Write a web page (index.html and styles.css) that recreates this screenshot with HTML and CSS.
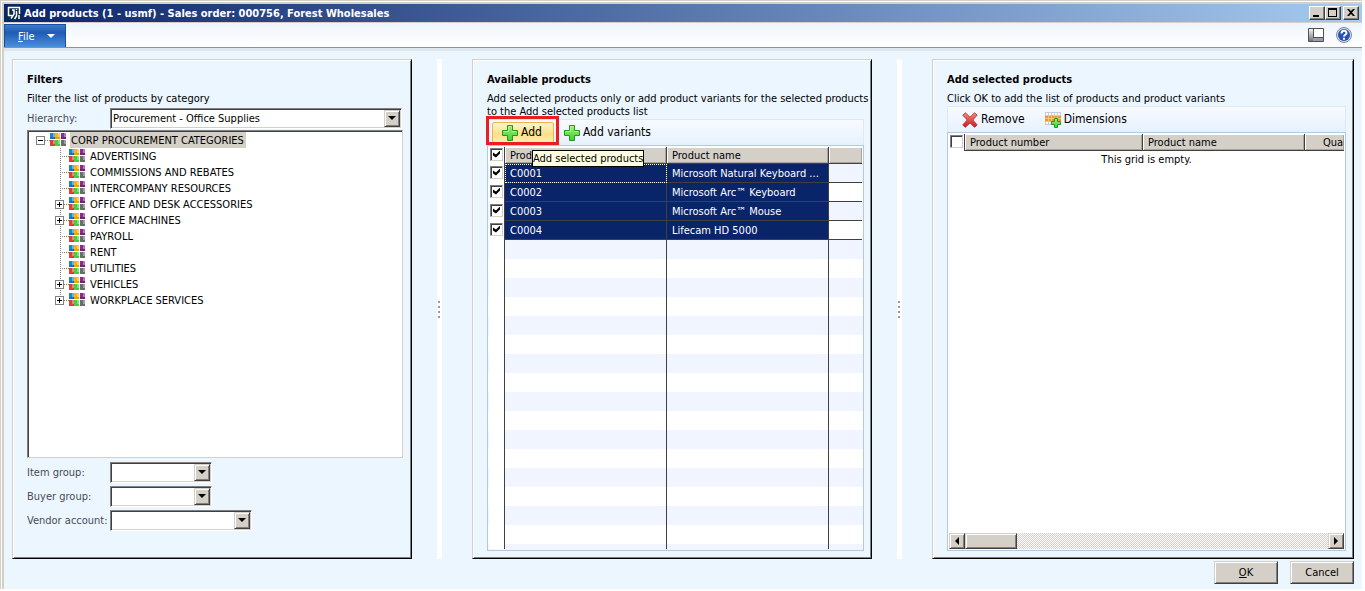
FILE: index.html
```html
<!DOCTYPE html>
<html lang="en">
<head>
    <meta charset="UTF-8">
    <meta name="viewport" content="width=device-width, initial-scale=1.0">
    <title>Add products (1 - usmf) - Sales order: 000756, Forest Wholesales</title>
    <link rel="stylesheet" href="styles.css">
</head>
<body>
    <!-- Shared icons -->
    <svg class="sprite" aria-hidden="true">
        <linearGradient id="plus-fill" x1="0" y1="0" x2="0" y2="1">
            <stop offset="0" stop-color="#a4ee7c"/>
            <stop offset="1" stop-color="#43cd33"/>
        </linearGradient>
        <linearGradient id="cross-fill" x1="0" y1="0" x2="0" y2="1">
            <stop offset="0" stop-color="#f58a84"/>
            <stop offset="1" stop-color="#d0161c"/>
        </linearGradient>
        <linearGradient id="pane-fill" x1="0" y1="0" x2="0" y2="1">
            <stop offset="0" stop-color="#f4f4f6"/>
            <stop offset="1" stop-color="#70757c"/>
        </linearGradient>
        <symbol id="icon-category" viewBox="0 -1 16 16">
            <path fill="#1b87d0" d="M0 0h5v6H0z"/>
            <path fill="#f9b414" d="M5 0h5v6H5z"/>
            <path fill="#8e2a96" d="M11 0h5v6h-5z"/>
            <path fill="#d9403a" d="M0 7h5v6H0z"/>
            <path fill="#3fd23c" d="M5 7h5v6H5z"/>
            <path fill="#6c6c6c" d="M11 7h5v6h-5z"/>
            <path fill="#fff" fill-opacity=".35" d="M3 0h2v4H3zM8 0h2v4H8zM14 0h2v4h-2zM3 7h2v4H3zM8 7h2v4H8zM14 7h2v4h-2z"/>
            <path fill="#0b5fa3" d="M0 4h5v2H0z" opacity=".5"/>
            <path fill="#d98800" d="M5 4h5v2H5z" opacity=".5"/>
            <path fill="#5e1266" d="M11 4h5v2h-5z" opacity=".5"/>
        </symbol>
        <symbol id="icon-plus" viewBox="0 0 16 16">
            <path fill="url(#plus-fill)" stroke="#1f9a1c" d="M5.500.500h5v5h5v5h-5v5h-5v-5h-5v-5h5z"/>
            <path fill="none" stroke="#c5f7ac" stroke-opacity=".7" d="M6.500 1.500h3M6.500 2v4.500H2M14 6.500h-4"/>
        </symbol>
        <symbol id="icon-cross" viewBox="0 0 16 16">
            <path fill="url(#cross-fill)" stroke="#a8262a" stroke-width=".8" stroke-linejoin="round" d="M3.500.800 8 5.200 12.500.800 15.200 3 10.800 8 15.200 13 12.600 15.300 8 10.900 3.400 15.300.700 13 5.200 8 .800 3.200z"/>
        </symbol>
        <symbol id="icon-dimensions" viewBox="0 0 16 16">
            <path fill="#c3cde0" d="M0 0h16v13H0z"/>
            <path fill="#fff" d="M1 1h2v2H1zM4 1h2v2H4zM7 1h2v2H7zM10 1h2v2h-2zM13 1h2v2h-2zM1 10h2v2H1zM4 10h2v2H4z"/>
            <path fill="#f0962c" d="M0 4h16v5H0z"/>
            <path stroke="#fbd49a" stroke-opacity=".7" d="M3.500 4v5M6.500 4v5M9.500 4v5M12.500 4v5M0 6.500h16"/>
            <path fill="url(#plus-fill)" stroke="#1f9a1c" d="M9.500 6.500h3v3h3v3h-3v3h-3v-3h-3v-3h3z"/>
        </symbol>
    </svg>

    <div class="window">
        <div class="title-bar">
            <svg class="app-icon" viewBox="0 0 14 14" aria-hidden="true">
                <path fill="#0a2a50" d="M0 0h14v14H0z"/>
                <path fill="none" stroke="#fff" stroke-width="1.500" d="M1 1.500h12M1.500 1v9M1 9.500h4M12.500 1v7"/>
                <path fill="none" stroke="#fff" stroke-width="1.500" d="M5 4h2v4L4 12.500M9.500 5v5l-2 3M12 9v4M9.500 3v1"/>
            </svg>
            <h1 class="window-title">Add products (1 - usmf) - Sales order: 000756, Forest Wholesales</h1>
            <div class="window-buttons">
                <button type="button" class="bevel window-btn" aria-label="Minimize">
                    <svg viewBox="0 0 12 10"><path d="M2 7h6v2H2z"/></svg>
                </button>
                <button type="button" class="bevel window-btn" aria-label="Maximize">
                    <svg viewBox="0 0 12 10"><path fill-rule="evenodd" d="M1 0h9v9H1zM2 2v6h7V2z"/></svg>
                </button>
                <button type="button" class="bevel window-btn close-btn" aria-label="Close">
                    <svg viewBox="0 0 12 10"><path d="M2 1h2l2 2 2-2h2L7 4.500 10 8H8L6 6 4 8H2l3-3.500z"/></svg>
                </button>
            </div>
        </div>

        <div class="ribbon">
            <button type="button" class="file-btn">
                <span><u>F</u>ile</span>
                <svg viewBox="0 0 8 4" aria-hidden="true"><path fill="#fff" d="M0 0h8L4 4z"/></svg>
            </button>
            <div class="ribbon-tools">
                <button type="button" class="tool-btn" aria-label="View">
                    <svg viewBox="0 0 16 16">
                        <path fill="#fff" stroke="#4c5056" d="M.500 1.500h15v13H.500z"/>
                        <path fill="url(#pane-fill)" d="M1 2h4v12H1z"/>
                        <path fill="#9a9ea6" d="M5 11h10v3H5z"/>
                        <path stroke="#4c5056" d="M5.500 2v8M5 10.500h10"/>
                    </svg>
                </button>
                <button type="button" class="tool-btn" aria-label="Help">
                    <svg viewBox="0 0 16 16">
                        <circle cx="8" cy="8" r="7.500" fill="#d5dbe6" stroke="#7e8aa0"/>
                        <circle cx="8" cy="8" r="6" fill="#2750b8"/>
                        <path fill="none" stroke="#fff" stroke-width="2" d="M5.500 6.500c0-3.500 5-3.500 5-.500C10.500 8 8 7.500 8 9.600"/>
                        <path fill="#fff" d="M7 10.800h2v2H7z"/>
                    </svg>
                </button>
            </div>
        </div>

        <main class="workspace">
            <section class="panel filters">
                <h2>Filters</h2>
                <p>Filter the list of products by category</p>
                <div class="field">
                    <label for="hierarchy">Hierarchy:</label>
                    <div class="combo combo-wide">
                        <select id="hierarchy"><option>Procurement - Office Supplies</option></select>
                        <span class="bevel combo-arrow"></span>
                    </div>
                </div>

                <div class="tree">
                    <div class="tree-row root-row">
                        <button type="button" class="expander open" aria-label="Collapse"></button>
                        <svg class="icon"><use href="#icon-category"/></svg>
                        <span class="tree-label selected">CORP PROCUREMENT CATEGORIES</span>
                    </div>
                    <ul>
                        <li class="tree-row"><svg class="icon"><use href="#icon-category"/></svg><span class="tree-label">ADVERTISING</span></li>
                        <li class="tree-row"><svg class="icon"><use href="#icon-category"/></svg><span class="tree-label">COMMISSIONS AND REBATES</span></li>
                        <li class="tree-row"><svg class="icon"><use href="#icon-category"/></svg><span class="tree-label">INTERCOMPANY RESOURCES</span></li>
                        <li class="tree-row"><button type="button" class="expander" aria-label="Expand"></button><svg class="icon"><use href="#icon-category"/></svg><span class="tree-label">OFFICE AND DESK ACCESSORIES</span></li>
                        <li class="tree-row"><button type="button" class="expander" aria-label="Expand"></button><svg class="icon"><use href="#icon-category"/></svg><span class="tree-label">OFFICE MACHINES</span></li>
                        <li class="tree-row"><svg class="icon"><use href="#icon-category"/></svg><span class="tree-label">PAYROLL</span></li>
                        <li class="tree-row"><svg class="icon"><use href="#icon-category"/></svg><span class="tree-label">RENT</span></li>
                        <li class="tree-row"><svg class="icon"><use href="#icon-category"/></svg><span class="tree-label">UTILITIES</span></li>
                        <li class="tree-row"><button type="button" class="expander" aria-label="Expand"></button><svg class="icon"><use href="#icon-category"/></svg><span class="tree-label">VEHICLES</span></li>
                        <li class="tree-row"><button type="button" class="expander" aria-label="Expand"></button><svg class="icon"><use href="#icon-category"/></svg><span class="tree-label">WORKPLACE SERVICES</span></li>
                    </ul>
                </div>

                <div class="field">
                    <label for="item-group">Item group:</label>
                    <div class="combo">
                        <select id="item-group"><option></option></select>
                        <span class="bevel combo-arrow"></span>
                    </div>
                </div>
                <div class="field">
                    <label for="buyer-group">Buyer group:</label>
                    <div class="combo">
                        <select id="buyer-group"><option></option></select>
                        <span class="bevel combo-arrow"></span>
                    </div>
                </div>
                <div class="field">
                    <label for="vendor">Vendor account:</label>
                    <div class="combo combo-medium">
                        <select id="vendor"><option></option></select>
                        <span class="bevel combo-arrow"></span>
                    </div>
                </div>
            </section>

            <div class="splitter"><span class="grip"></span></div>

            <section class="panel available">
                <h2>Available products</h2>
                <p>Add selected products only or add product variants for the selected products to the Add selected products list</p>
                <div class="toolbar">
                    <div class="add-wrap">
                        <button type="button" class="toolbar-btn hot">
                            <svg class="icon"><use href="#icon-plus"/></svg>Add
                        </button>
                        <span class="highlight"></span>
                        <span class="tooltip" role="tooltip">Add selected products</span>
                    </div>
                    <button type="button" class="toolbar-btn">
                        <svg class="icon"><use href="#icon-plus"/></svg>Add variants
                    </button>
                </div>
                <div class="grid striped">
                    <table>
                        <thead>
                            <tr>
                                <th class="col-check"><input type="checkbox" aria-label="Select all" checked></th>
                                <th class="col-data">Product number</th>
                                <th class="col-data">Product name</th>
                                <th></th>
                            </tr>
                        </thead>
                        <tbody>
                            <tr>
                                <td class="col-check"><input type="checkbox" aria-label="C0001" checked></td>
                                <td class="focused">C0001</td>
                                <td>Microsoft Natural Keyboard ...</td>
                                <td class="rest"></td>
                            </tr>
                            <tr>
                                <td class="col-check"><input type="checkbox" aria-label="C0002" checked></td>
                                <td>C0002</td>
                                <td>Microsoft Arc™ Keyboard</td>
                                <td class="rest"></td>
                            </tr>
                            <tr>
                                <td class="col-check"><input type="checkbox" aria-label="C0003" checked></td>
                                <td>C0003</td>
                                <td>Microsoft Arc™ Mouse</td>
                                <td class="rest"></td>
                            </tr>
                            <tr>
                                <td class="col-check"><input type="checkbox" aria-label="C0004" checked></td>
                                <td>C0004</td>
                                <td>Lifecam HD 5000</td>
                                <td class="rest"></td>
                            </tr>
                        </tbody>
                    </table>
                    <div class="filler">
                        <span class="col-check"></span>
                        <span class="col-data"></span>
                        <span class="col-data"></span>
                    </div>
                </div>
            </section>

            <div class="splitter"><span class="grip"></span></div>

            <section class="panel chosen">
                <h2>Add selected products</h2>
                <p>Click OK to add the list of products and product variants</p>
                <div class="toolbar">
                    <button type="button" class="toolbar-btn">
                        <svg class="icon"><use href="#icon-cross"/></svg>Remove
                    </button>
                    <button type="button" class="toolbar-btn">
                        <svg class="icon"><use href="#icon-dimensions"/></svg>Dimensions
                    </button>
                </div>
                <div class="grid">
                    <table>
                        <thead>
                            <tr>
                                <th class="col-check"><input type="checkbox" aria-label="Select all"></th>
                                <th class="col-number">Product number</th>
                                <th class="col-data">Product name</th>
                                <th class="col-quantity">Quantity</th>
                            </tr>
                        </thead>
                    </table>
                    <div class="empty">This grid is empty.</div>
                    <div class="scrollbar">
                        <button type="button" class="bevel scroll-btn" aria-label="Scroll left">
                            <svg viewBox="0 0 4 8"><path d="M4 0v8L0 4z"/></svg>
                        </button>
                        <span class="bevel thumb"></span>
                        <button type="button" class="bevel scroll-btn scroll-right" aria-label="Scroll right">
                            <svg viewBox="0 0 4 8"><path d="M0 0v8l4-4z"/></svg>
                        </button>
                    </div>
                </div>
            </section>
        </main>

        <footer class="actions">
            <button type="button" class="bevel action-btn"><u>O</u>K</button>
            <button type="button" class="bevel action-btn">Cancel</button>
        </footer>
    </div>
</body>
</html>
```

FILE: styles.css
```css
* {
    box-sizing: border-box;
}

body {
    margin: 0;
    padding: 0 3px 2px 0;
    background-color: #ffffff;
    color: #000000;
    font-family: "DejaVu Sans Condensed", Tahoma, sans-serif;
    font-size: 11px;
    line-height: 13px;
}

button, select, input {
    font: inherit;
    color: inherit;
}

button {
    padding: 0;
    border: none;
    background: none;
}

h1, h2, p, ul {
    margin: 0;
    padding: 0;
}

.sprite {
    position: absolute;
    width: 0;
    height: 0;
}

.icon {
    width: 16px;
    height: 16px;
    flex: none;
}

/* Raised grey control */
.bevel {
    background-color: #d4d0c8;
    border: 1px solid;
    border-color: #d4d0c8 #404040 #404040 #d4d0c8;
    box-shadow: inset 1px 1px #ffffff, inset -1px -1px #808080;
}

.window {
    display: flex;
    flex-direction: column;
    min-height: calc(100vh - 2px);
    background-color: #ebf6ff;
    border: 1px solid #d4d0c8;
    border-width: 1px 0 0 1px;
    box-shadow: inset 1px 1px #ffffff, inset 3px 3px #d4d0c8;
    padding: 3px 0 0 3px;
}

/* Title bar */
.title-bar {
    display: flex;
    align-items: center;
    height: 18px;
    padding: 0 3px;
    background: linear-gradient(to right, #0a246a, #a6caf0);
}

.app-icon {
    width: 14px;
    height: 14px;
}

.window-title {
    flex: 1;
    padding-left: 3px;
    color: #ffffff;
    font-size: 11px;
    font-weight: bold;
}

.window-buttons {
    display: flex;
}

.window-btn {
    display: flex;
    align-items: center;
    justify-content: center;
    width: 16px;
    height: 14px;
    border-color: #ffffff #404040 #404040 #ffffff;
    box-shadow: inset -1px -1px #808080;
}

.window-btn svg {
    width: 12px;
    height: 10px;
}

.close-btn {
    margin-left: 2px;
}

/* Ribbon */
.ribbon {
    display: flex;
    justify-content: space-between;
    height: 26px;
    border-top: 1px solid #d4d0c8;
    border-bottom: 1px solid #8e9299;
    background: linear-gradient(#eff5fd, #ffffff);
}

.file-btn {
    display: flex;
    align-items: center;
    gap: 12px;
    width: 62px;
    margin-top: 1px;
    padding-left: 13px;
    color: #ffffff;
    border: 1px solid #1c4d9e;
    border-bottom: none;
    background: linear-gradient(#3d7dcc, #1f5cb3 35%, #4a8fe0);
}

.file-btn svg {
    width: 8px;
    height: 4px;
}

.ribbon-tools {
    display: flex;
    align-items: center;
    gap: 12px;
    padding-right: 10px;
}

.tool-btn, .tool-btn svg {
    display: block;
    width: 16px;
    height: 16px;
}

/* Workspace */
.workspace {
    flex: 1;
    display: flex;
    padding: 8px 8px 0;
    border-top: 3px solid #dfe6ee;
}

.panel {
    display: flex;
    flex-direction: column;
    flex: 0 1 400px;
    min-width: 0;
    padding: 12px 7px 7px 14px;
    border: 1px solid;
    border-color: #d4d0c8 #000000 #000000 #d4d0c8;
    box-shadow: inset 1px 1px #ffffff, inset -1px -1px #808080;
}

.panel h2 {
    margin-bottom: 4px;
    font-size: 11px;
    font-weight: bold;
    line-height: 16px;
}

.panel p {
    margin: 0 -6px 1px 0;
}

.filters {
    padding-right: 8px;
    padding-bottom: 26px;
}

.chosen {
    flex: 1;
}

.splitter {
    display: flex;
    align-items: center;
    width: 5px;
    margin: 0 30px 0 25px;
    padding-left: 1px;
    background-color: #ffffff;
}

.grip {
    width: 2px;
    height: 17px;
    background: repeating-linear-gradient(#9a9a9e 0 2px, transparent 2px 5px);
}

/* Fields */
.field {
    display: flex;
    align-items: center;
    height: 24px;
}

.field label {
    flex: none;
    width: 83px;
    color: #4a4a55;
    white-space: nowrap;
}

.combo {
    position: relative;
    width: 102px;
}

.combo-medium {
    width: 142px;
}

.combo-wide {
    width: 292px;
}

.combo select {
    appearance: none;
    display: block;
    width: 100%;
    height: 21px;
    padding: 0 18px 0 2px;
    border: 1px solid;
    border-color: #808080 #ffffff #ffffff #808080;
    border-radius: 0;
    background-color: #ffffff;
    box-shadow: inset 1px 1px #404040, inset -1px -1px #d4d0c8;
}

.combo-arrow {
    position: absolute;
    top: 2px;
    right: 2px;
    bottom: 2px;
    display: flex;
    align-items: center;
    justify-content: center;
    width: 16px;
    pointer-events: none;
}

.combo-arrow::after {
    content: "";
    border: 4px solid transparent;
    border-top-color: #000000;
    border-bottom: none;
}

/* Category tree */
.tree {
    flex: 1;
    margin-bottom: 2px;
    padding: 1px 0 0 8px;
    border: 1px solid;
    border-color: #808080 #d4d0c8 #d4d0c8 #808080;
    background-color: #ffffff;
    box-shadow: inset 1px 1px #404040;
}

.tree ul {
    margin-left: 24px;
    list-style: none;
    background: repeating-linear-gradient(#808080 0 1px, #ffffff 1px 2px) no-repeat 0 0 / 1px calc(100% - 8px);
}

.tree-row {
    display: flex;
    align-items: center;
    height: 16px;
    background: repeating-linear-gradient(to right, #808080 0 1px, transparent 1px 2px) no-repeat 0 8px / 9px 1px;
}

.tree li {
    padding-left: 9px;
}

.root-row {
    background-position: 9px 8px;
    background-size: 6px 1px;
}

.expander {
    width: 9px;
    height: 9px;
    margin-left: -14px;
    margin-right: 5px;
    border: 1px solid #808080;
    background:
        linear-gradient(#000000, #000000) no-repeat center / 5px 1px,
        linear-gradient(#000000, #000000) no-repeat center / 1px 5px,
        #ffffff;
}

.expander.open {
    margin-left: 0;
    background: linear-gradient(#000000, #000000) no-repeat center / 5px 1px, #ffffff;
}

.tree-label {
    margin-left: 4px;
    padding: 2px 2px 0 1px;
    line-height: 14px;
    white-space: nowrap;
}

.tree-label.selected {
    background-color: #d4d0c8;
}

/* Toolbars */
.toolbar {
    display: flex;
    align-items: center;
    height: 26px;
    padding-left: 4px;
    border: 1px solid #dde9f6;
    border-bottom: none;
    background: linear-gradient(#f8fbff, #e6f1fd);
}

.toolbar-btn {
    display: flex;
    align-items: center;
    gap: 3px;
    height: 21px;
    padding: 0 9px;
    border: 1px solid transparent;
    font-size: 12px;
    white-space: nowrap;
}

.toolbar-btn.hot {
    padding-right: 11px;
    border-color: #e8b54a;
    border-radius: 2px;
    background: linear-gradient(#fdf3cf, #fbdf87 60%, #fdeeb2);
}

.add-wrap {
    position: relative;
}

.highlight {
    position: absolute;
    inset: -6px -5px -2px -6px;
    border: 3px solid #ed1c24;
    pointer-events: none;
}

.tooltip {
    position: absolute;
    top: 28px;
    left: 40px;
    z-index: 1;
    padding: 1px 0;
    border: 1px solid #000000;
    background-color: #ffffe1;
    white-space: nowrap;
}

/* Grids */
.grid {
    flex: 1;
    display: flex;
    flex-direction: column;
    min-height: 0;
    padding: 1px;
    border: 1px solid #b4c9e0;
    background-color: #ffffff;
    overflow: hidden;
}

.grid table {
    width: 100%;
    table-layout: fixed;
    border-collapse: separate;
    border-spacing: 0;
}

.grid th, .grid td {
    padding: 0 0 0 5px;
    border-right: 1px solid #404040;
    border-bottom: 1px solid #404040;
    text-align: left;
    font-weight: normal;
    white-space: nowrap;
    overflow: hidden;
}

.grid th {
    height: 17px;
    background-color: #d4d0c8;
    box-shadow: inset 1px 1px #ffffff, inset -1px -1px #a8a59e;
}

.grid td {
    height: 19px;
    background-color: #0a246a;
    color: #ffffff;
}

.grid th:last-child, .grid td:last-child {
    border-right: none;
}

.grid .col-check {
    width: 16px;
    padding: 0;
    border-bottom: none;
    background-color: #ffffff;
    box-shadow: none;
}

.grid .col-data {
    width: 162px;
}

.grid .col-number {
    width: 178px;
}

.grid .col-quantity {
    padding-left: 18px;
    text-overflow: clip;
}

.grid td.rest {
    background-color: transparent;
}

.grid td.focused {
    outline: 1px dotted #ffffff;
    outline-offset: -1px;
}

.striped {
    background-image: linear-gradient(#f0f5ff 50%, #ffffff 50%);
    background-size: 100% 38px;
    background-position: 0 18px;
}

.filler {
    flex: 1;
    display: flex;
}

.filler span {
    border-right: 1px solid #404040;
}

.grid input {
    appearance: none;
    display: block;
    width: 13px;
    height: 13px;
    margin: 0 0 3px 1px;
    border: 1px solid;
    border-color: #808080 #d4d0c8 #d4d0c8 #808080;
    background-color: #ffffff;
    box-shadow: inset 1px 1px #404040;
}

.grid input:checked::after {
    content: "";
    display: block;
    width: 7px;
    height: 7px;
    margin: 2px;
    background-color: #000000;
    clip-path: polygon(0 28%, 43% 58%, 100% 0, 100% 43%, 43% 100%, 0 71%);
}

.empty {
    flex: 1;
    padding-top: 2px;
    text-align: center;
}

.scrollbar {
    display: flex;
    height: 16px;
    background: repeating-conic-gradient(#d4d0c8 0 25%, #ffffff 0 50%) 0 0 / 2px 2px;
}

.scroll-btn {
    display: flex;
    align-items: center;
    justify-content: center;
    width: 16px;
}

.scroll-btn svg {
    width: 4px;
    height: 8px;
}

.scroll-right {
    margin-left: auto;
}

.thumb {
    width: 52px;
}

/* Bottom buttons */
.actions {
    display: flex;
    justify-content: flex-end;
    gap: 12px;
    padding: 2px 8px 5px;
}

.action-btn {
    min-width: 64px;
    height: 23px;
}
```
